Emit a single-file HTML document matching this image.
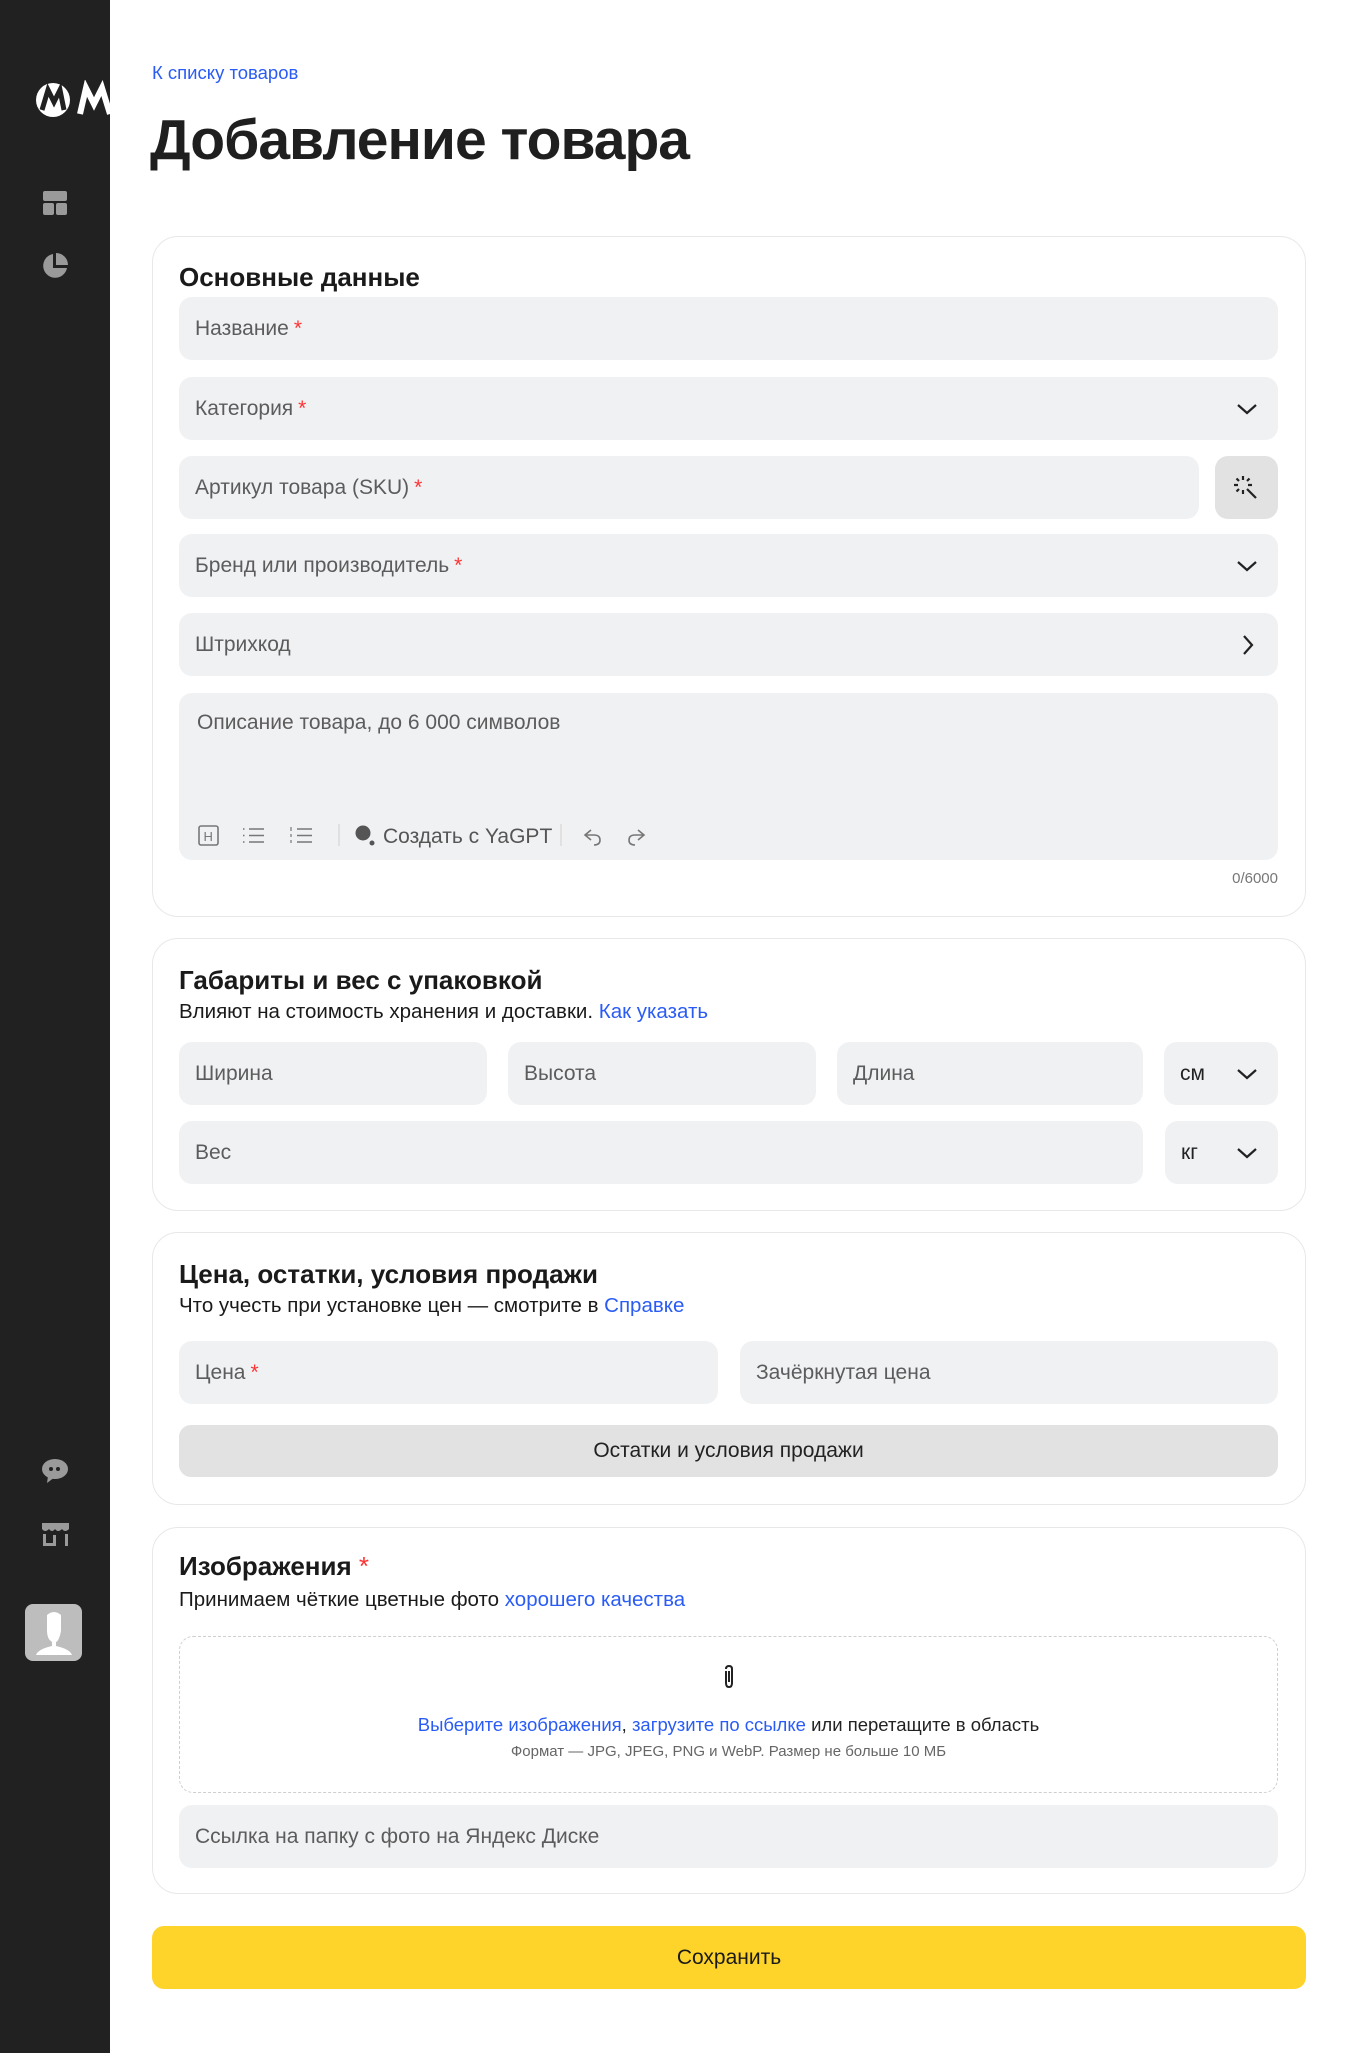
<!DOCTYPE html>
<html><head><meta charset="utf-8"><style>
*{box-sizing:border-box;margin:0;padding:0}
body{width:1360px;height:2053px;background:#fff;font-family:"Liberation Sans","Noto Sans CJK SC",sans-serif;position:relative;overflow:hidden;color:#1a1a1a}
.a{position:absolute}
.sb{left:0;top:0;width:110px;height:2053px;background:#212121}
.card{position:absolute;left:152px;width:1154px;border:1.5px solid #e8e8e8;border-radius:26px}
.in{position:absolute;background:#f0f1f3;border-radius:13px;font-size:21px;color:#5c5c5c;display:flex;align-items:center;padding-left:16px}
.in b{color:#f33;font-weight:normal;margin-left:5px}
.h{position:absolute;font-size:26px;font-weight:bold;color:#1a1a1a;line-height:30px}
.sub{position:absolute;font-size:20.5px;color:#1a1a1a;line-height:24px}
.lnk{color:#2a5cf5}
.chev{position:absolute;right:20px;top:50%;margin-top:-6px}
</style></head><body>
<div class="a sb"></div>
<svg class="a" style="left:34px;top:80px" width="76" height="42" viewBox="0 0 76 42"><circle cx="19" cy="20" r="17" fill="#fff"/><path d="M8 30 L14 10 L20 22 L26 10 L30 30" stroke="#212121" stroke-width="5" fill="none"/><path d="M46 34 L52 8 L60 24 L68 8 L76 34" stroke="#fff" stroke-width="6" fill="none"/></svg>
<svg class="a" style="left:43px;top:191px" width="24" height="24"><rect x="0" y="0" width="24" height="10" rx="2" fill="#9a9a9a"/><rect x="0" y="12" width="11" height="12" rx="2" fill="#9a9a9a"/><rect x="13" y="12" width="11" height="12" rx="2" fill="#9a9a9a"/></svg>
<svg class="a" style="left:41px;top:252px" width="28" height="28" viewBox="0 0 28 28"><path d="M12 2 A12 12 0 1 0 26 16 L12 16 Z" fill="#9a9a9a"/><path d="M15 1 A12 12 0 0 1 27 13 L15 13 Z" fill="#9a9a9a"/></svg>
<svg class="a" style="left:41px;top:1458px" width="28" height="26" viewBox="0 0 28 26"><ellipse cx="14" cy="11" rx="13" ry="10" fill="#9a9a9a"/><path d="M7 18 L6 25 L14 19 Z" fill="#9a9a9a"/><circle cx="10" cy="11" r="2" fill="#212121"/><circle cx="17" cy="11" r="2" fill="#212121"/></svg>
<svg class="a" style="left:42px;top:1523px" width="28" height="24" viewBox="0 0 28 24"><path d="M0 0 H27 V6 Q23 10 20 6 Q16 10 13 6 Q10 10 7 6 Q3 10 0 6 Z" fill="#9a9a9a"/><rect x="1" y="11" width="3" height="12" fill="#9a9a9a"/><rect x="1" y="20" width="13" height="3" fill="#9a9a9a"/><rect x="11" y="12" width="3" height="9" fill="#9a9a9a"/><rect x="23" y="11" width="3" height="12" fill="#9a9a9a"/></svg>
<div class="a" style="left:25px;top:1604px;width:57px;height:57px;border-radius:8px;background:#bdbdbd"></div>
<svg class="a" style="left:34px;top:1609px" width="40" height="50" viewBox="0 0 40 50"><path d="M13 6 Q20 0 27 6 L27 22 Q25 32 22 33 L22 37 Q36 40 38 46 L2 46 Q4 40 18 37 L18 33 Q13 30 13 22 Z" fill="#fff"/></svg>

<div class="a lnk" style="left:152px;top:62px;font-size:18.5px;line-height:22px">К списку товаров</div>
<div class="a" style="left:150px;top:106px;font-size:57px;line-height:68px;font-weight:bold;letter-spacing:-1px;color:#1f1f1f">Добавление товара</div>

<div class="card" style="top:236px;height:681px"></div>
<div class="h" style="left:179px;top:262px">Основные данные</div>
<div class="in" style="left:179px;top:297px;width:1099px;height:63px">Название<b>*</b></div>
<div class="in" style="left:179px;top:377px;width:1099px;height:63px">Категория<b>*</b><svg class="chev" width="22" height="12"><path d="M2 2 L11 10 L20 2" stroke="#222" stroke-width="2.2" fill="none"/></svg></div>
<div class="in" style="left:179px;top:456px;width:1020px;height:63px">Артикул товара (SKU)<b>*</b></div>
<div class="a" style="left:1215px;top:456px;width:63px;height:63px;background:#e2e2e2;border-radius:13px"></div>
<svg class="a" style="left:1232px;top:474px" width="28" height="28" viewBox="0 0 28 28" stroke="#222" stroke-width="2.2" fill="none"><path d="M11 2 V6 M2 11 H6 M16 11 H20 M4.5 4.5 L7 7 M17.5 4.5 L15 7 M4.5 17.5 L7 15 M11 16 V20 M15 15 L24 24"/></svg>
<div class="in" style="left:179px;top:534px;width:1099px;height:63px">Бренд или производитель<b>*</b><svg class="chev" width="22" height="12"><path d="M2 2 L11 10 L20 2" stroke="#222" stroke-width="2.2" fill="none"/></svg></div>
<div class="in" style="left:179px;top:613px;width:1099px;height:63px">Штрихкод<svg class="chev" style="margin-top:-11px;right:24px" width="12" height="22"><path d="M2 2 L10 11 L2 20" stroke="#222" stroke-width="2.2" fill="none"/></svg></div>
<div class="in" style="left:179px;top:693px;width:1099px;height:167px;align-items:flex-start;padding:18px 18px">Описание товара, до 6 000 символов</div>
<svg class="a" style="left:197px;top:820px" width="480" height="30" viewBox="0 0 480 30" fill="none" stroke="#777" stroke-width="1.6">
<rect x="2" y="6" width="19" height="19" rx="2"/><text x="6.5" y="21" font-size="13" fill="#777" stroke="none" font-family="Liberation Sans">H</text>
<path d="M52 9 H67 M52 15.5 H67 M52 22 H67 M46 9 H47.5 M46 15.5 H47.5 M46 22 H47.5"/>
<path d="M100 9 H115 M100 15.5 H115 M100 22 H115"/><path d="M94 7 V11 M94 14 V17 M94 20 V23" stroke-width="1.2"/>
<path d="M142 4 V26" stroke="#ddd"/>
<circle cx="166" cy="13" r="7.5" fill="#555" stroke="none"/><circle cx="175" cy="23" r="2.5" fill="#555" stroke="none"/>
<text x="186" y="23" font-size="21" fill="#555" stroke="none" font-family="Liberation Sans">Создать с YaGPT</text>
<path d="M364 4 V26" stroke="#ddd"/>
<path d="M394 10 L388 15 L394 20 M389 15 H397 Q403 15 403 20 Q403 25 397 25" />
<path d="M441 10 L447 15 L441 20 M446 15 H438 Q432 15 432 20 Q432 25 438 25"/>
</svg>
<div class="a" style="left:1200px;top:870px;width:78px;text-align:right;font-size:15px;color:#777">0/6000</div>

<div class="card" style="top:938px;height:273px"></div>
<div class="h" style="left:179px;top:965px">Габариты и вес с упаковкой</div>
<div class="sub" style="left:179px;top:1000px">Влияют на стоимость хранения и доставки. <span class="lnk">Как указать</span></div>
<div class="in" style="left:179px;top:1042px;width:308px;height:63px">Ширина</div>
<div class="in" style="left:508px;top:1042px;width:308px;height:63px">Высота</div>
<div class="in" style="left:837px;top:1042px;width:306px;height:63px">Длина</div>
<div class="in" style="left:1164px;top:1042px;width:114px;height:63px;color:#222">см<svg class="chev" width="22" height="12"><path d="M2 2 L11 10 L20 2" stroke="#222" stroke-width="2.2" fill="none"/></svg></div>
<div class="in" style="left:179px;top:1121px;width:964px;height:63px">Вес</div>
<div class="in" style="left:1165px;top:1121px;width:113px;height:63px;color:#222">кг<svg class="chev" width="22" height="12"><path d="M2 2 L11 10 L20 2" stroke="#222" stroke-width="2.2" fill="none"/></svg></div>

<div class="card" style="top:1232px;height:273px"></div>
<div class="h" style="left:179px;top:1259px">Цена, остатки, условия продажи</div>
<div class="sub" style="left:179px;top:1294px">Что учесть при установке цен — смотрите в <span class="lnk">Справке</span></div>
<div class="in" style="left:179px;top:1341px;width:539px;height:63px">Цена<b>*</b></div>
<div class="in" style="left:740px;top:1341px;width:538px;height:63px">Зачёркнутая цена</div>
<div class="a" style="left:179px;top:1425px;width:1099px;height:52px;background:#e2e2e2;border-radius:12px;font-size:21px;display:flex;align-items:center;justify-content:center;color:#222">Остатки и условия продажи</div>

<div class="card" style="top:1527px;height:367px"></div>
<div class="h" style="left:179px;top:1551px">Изображения <span style="color:#f33;font-weight:normal">*</span></div>
<div class="sub" style="left:179px;top:1588px">Принимаем чёткие цветные фото <span class="lnk">хорошего качества</span></div>
<div class="a" style="left:179px;top:1636px;width:1099px;height:157px;border:1.5px dashed #cfcfcf;border-radius:14px"></div>
<svg class="a" style="left:722px;top:1665px" width="14" height="24" viewBox="0 0 14 24" fill="none" stroke="#222" stroke-width="2"><path d="M4 6 V18 Q4 22 7 22 Q10 22 10 18 V4 Q10 1 7 1 Q4 1 4 4"/><path d="M7 6 V17"/></svg>
<div class="a" style="left:179px;top:1714px;width:1099px;text-align:center;font-size:18.5px;line-height:22px;color:#222"><span class="lnk">Выберите изображения</span>, <span class="lnk">загрузите по ссылке</span> или перетащите в область</div>
<div class="a" style="left:179px;top:1743px;width:1099px;text-align:center;font-size:15px;line-height:18px;color:#666">Формат — JPG, JPEG, PNG и WebP. Размер не больше 10 МБ</div>
<div class="in" style="left:179px;top:1805px;width:1099px;height:63px">Ссылка на папку с фото на Яндекс Диске</div>

<div class="a" style="left:152px;top:1926px;width:1154px;height:63px;background:#fed42b;border-radius:12px;font-size:21px;display:flex;align-items:center;justify-content:center;color:#1a1a1a">Сохранить</div>
</body></html>
